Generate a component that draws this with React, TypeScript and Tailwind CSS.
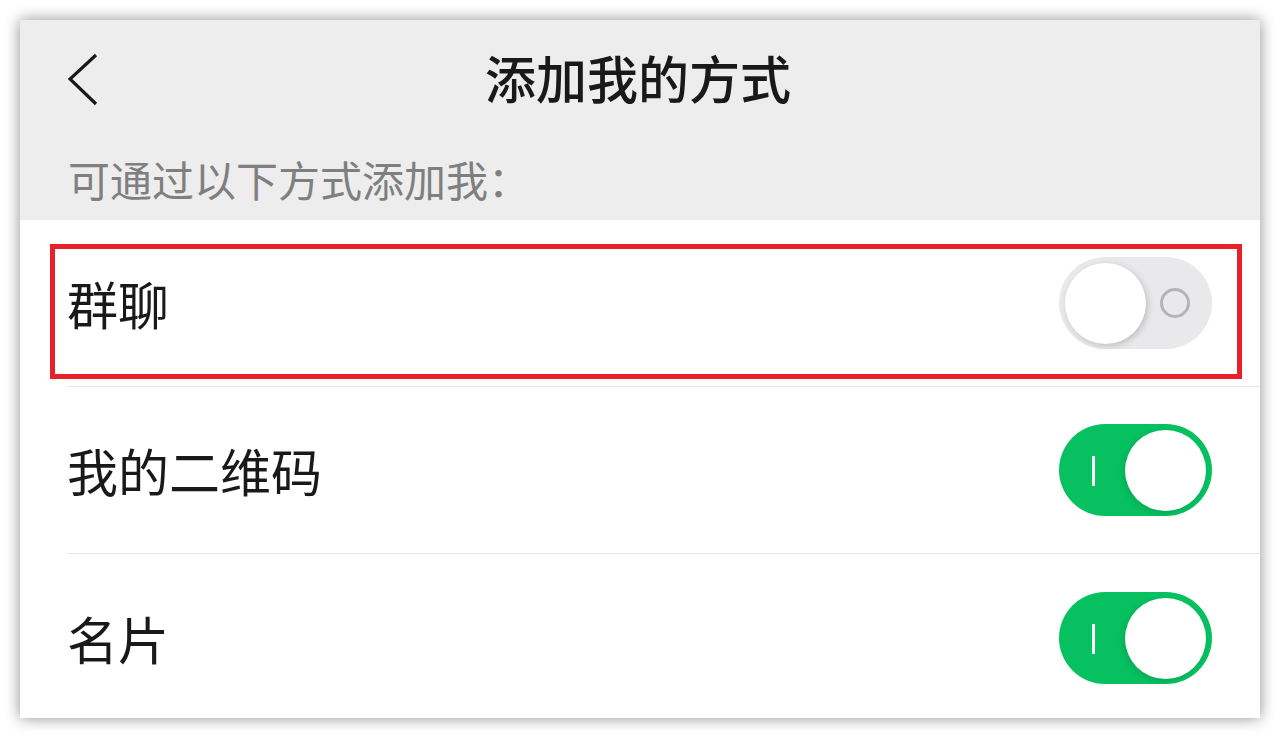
import React from "react";

function Toggle({ on }: { on: boolean }) {
  if (on) {
    return (
      <div className="relative w-[153px] h-[92px] rounded-full bg-[#07c160] flex items-center justify-end pr-[6px] shrink-0">
        <div className="absolute left-[33px] top-[32px] w-[3px] h-[30px] bg-white" />
        <div className="w-[81px] h-[81px] rounded-full bg-white shadow-[-2px_2px_6px_rgba(0,0,0,0.12)]" />
      </div>
    );
  }
  return (
    <div className="relative w-[153px] h-[92px] rounded-full bg-[#e9e9eb] flex items-center justify-start pl-[6px] shrink-0">
      <div className="w-[81px] h-[81px] rounded-full bg-white shadow-[2px_2px_6px_rgba(0,0,0,0.18)]" />
      <div className="absolute left-[101px] top-[31px] w-[30px] h-[30px] rounded-full border-[3px] border-[#b4b4b4]" />
    </div>
  );
}

function Row({
  label,
  on,
  height,
  children,
}: {
  label: string;
  on: boolean;
  height: string;
  children?: React.ReactNode;
}) {
  return (
    <div className={`relative flex items-center justify-between pl-[47px] pr-[48px] ${height}`}>
      <span className="text-[51px] leading-none text-[#191919]">{label}</span>
      <Toggle on={on} />
      {children}
    </div>
  );
}

export default function App() {
  return (
    <div className="w-[1280px] h-[738px] bg-white p-[20px]">
      <div className="w-[1240px] h-[698px] bg-white shadow-[0_0_14px_rgba(0,0,0,0.45)] flex flex-col overflow-hidden font-['Noto_Sans_CJK_SC',sans-serif]">
        <div className="h-[200px] bg-[#ededed] flex flex-col">
          <div className="h-[114px] grid grid-cols-[1fr_auto_1fr] items-center">
            <div className="pl-[48px] pt-[4px] flex items-center">
              <svg width="32" height="54" viewBox="0 0 32 54" fill="none">
                <polyline
                  points="28,3 2,27 28,52"
                  stroke="#191919"
                  strokeWidth="3.2"
                  strokeLinecap="butt"
                  strokeLinejoin="miter"
                />
              </svg>
            </div>
            <div className="text-[51px] leading-none font-medium text-[#191919] pr-[4px]">添加我的方式</div>
            <div />
          </div>
          <div className="pl-[48px] pt-[24px] text-[42px] leading-none text-[#7f7f7f]">可通过以下方式添加我：</div>
        </div>
        <div className="flex-1 flex flex-col bg-white">
          <Row label="群聊" on={false} height="h-[166px]">
            <div className="absolute left-[30px] top-[24px] w-[1192px] h-[135px] border-[5px] border-[#e8202a]" />
          </Row>
          <div className="ml-[47px] h-px bg-[#e6e6e6]" />
          <Row label="我的二维码" on={true} height="h-[166px]" />
          <div className="ml-[47px] h-px bg-[#e6e6e6]" />
          <Row label="名片" on={true} height="flex-1 pt-[4px]" />
        </div>
      </div>
    </div>
  );
}
